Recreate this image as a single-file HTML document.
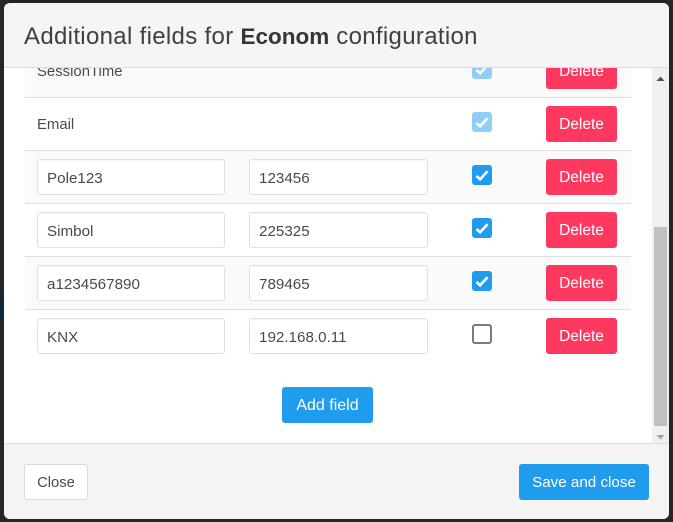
<!DOCTYPE html>
<html><head><meta charset="utf-8">
<style>
html,body{margin:0;padding:0;width:673px;height:522px;overflow:hidden;background:#262626}
body{position:relative;font-family:"Liberation Sans",sans-serif;font-size:15.2px;color:#4a4a4a}
div,span{position:absolute;box-sizing:border-box;white-space:nowrap}
#modal{left:4px;top:3px;width:665px;height:516px;background:#fff;border-radius:6px;overflow:hidden}
#body{left:0;top:0;width:665px;height:516px}
.row{left:21px;width:606px;height:53px;border-bottom:1px solid #dedede}
.alt{background:#fafafa}
.in{height:36px;background:#fff;border:1px solid #e0e0e0;border-radius:3px;box-shadow:inset 0 1px 1px rgba(0,0,0,.04);line-height:37px;padding-left:9px;color:#4a4a4a}
.i1{left:33px;width:188px}
.i2{left:245px;width:179px}
.lbl{left:33px;color:#4a4a4a;line-height:22px;font-size:14.9px}
.del{left:542px;width:71px;height:36px;background:#ff3860;color:#fff;border-radius:3px;text-align:center;line-height:38px;font-size:15.5px}
.cb{left:468px;width:20px;height:20px;border-radius:3px;background:#209cee}
.cb svg{position:absolute;left:0;top:0}
.dis{background:#90cef8}
.off{background:#fff;border:2px solid #7a7a7a}
#hd{left:0;top:0;width:665px;height:65px;background:#f5f5f5;border-bottom:1px solid #dbdbdb;font-size:24px;line-height:67px;padding-left:20px;color:#404040;letter-spacing:.32px}
#hd b{color:#363636;font-size:22.500px;letter-spacing:0}
#ft{left:0;top:440px;width:665px;height:76px;background:#f4f4f4;border-top:1px solid #dbdbdb}
.btn{height:36px;border-radius:3px;text-align:center;line-height:38px}
.blue{background:#209cee;color:#fff}
#sb{left:648px;top:65px;width:17px;height:375px;background:#f0f0f0}
#th{left:2px;top:159px;width:13px;height:199px;background:#c0c0c0}
</style></head>
<body>
<div style="left:0;top:293px;width:4px;height:27px;background:#10283a"></div>
<div id="modal">
<div id="body">
<div class="row alt" style="top:42px"></div>
<div class="lbl" style="top:58px">SessionTime</div>
<div class="cb dis" style="top:56px"><svg width="20" height="20"><path d="M4.500 11l3.600 3.300 7.400-8" fill="none" stroke="#fff" stroke-width="2.600"/></svg></div>
<div class="del" style="top:50px">Delete</div>

<div class="row" style="top:95px"></div>
<div class="lbl" style="top:111px">Email</div>
<div class="cb dis" style="top:109px"><svg width="20" height="20"><path d="M4.500 11l3.600 3.300 7.400-8" fill="none" stroke="#fff" stroke-width="2.600"/></svg></div>
<div class="del" style="top:103px">Delete</div>

<div class="row alt" style="top:148px"></div>
<div class="in i1" style="top:156px">Pole123</div>
<div class="in i2" style="top:156px">123456</div>
<div class="cb" style="top:162px"><svg width="20" height="20"><path d="M4.500 11l3.600 3.300 7.400-8" fill="none" stroke="#fff" stroke-width="2.600"/></svg></div>
<div class="del" style="top:156px">Delete</div>

<div class="row" style="top:201px"></div>
<div class="in i1" style="top:209px">Simbol</div>
<div class="in i2" style="top:209px">225325</div>
<div class="cb" style="top:215px"><svg width="20" height="20"><path d="M4.500 11l3.600 3.300 7.400-8" fill="none" stroke="#fff" stroke-width="2.600"/></svg></div>
<div class="del" style="top:209px">Delete</div>

<div class="row alt" style="top:254px"></div>
<div class="in i1" style="top:262px">a1234567890</div>
<div class="in i2" style="top:262px">789465</div>
<div class="cb" style="top:268px"><svg width="20" height="20"><path d="M4.500 11l3.600 3.300 7.400-8" fill="none" stroke="#fff" stroke-width="2.600"/></svg></div>
<div class="del" style="top:262px">Delete</div>

<div class="in i1" style="top:315px">KNX</div>
<div class="in i2" style="top:315px">192.168.0.11</div>
<div class="cb off" style="top:321px"></div>
<div class="del" style="top:315px">Delete</div>

<div class="btn blue" style="left:278px;top:384px;width:91px;font-size:16px">Add field</div>
</div>
<div id="sb">
<svg style="position:absolute;left:0;top:0" width="17" height="375"><path d="M4.500 13h8l-4-4.500z" fill="#505050"/><path d="M4.500 367h8l-4 4.500z" fill="#a3a3a3"/></svg>
<div id="th"></div>
</div>
<div id="hd">Additional fields for <b>Econom</b> configuration</div>
<div id="ft">
<div class="btn" style="left:20px;top:20px;width:64px;background:#fff;border:1px solid #dbdbdb;line-height:36px;color:#4a4a4a;font-size:14.800px">Close</div>
<div class="btn blue" style="left:515px;top:20px;width:130px">Save and close</div>
</div>
</div>
</body></html>
